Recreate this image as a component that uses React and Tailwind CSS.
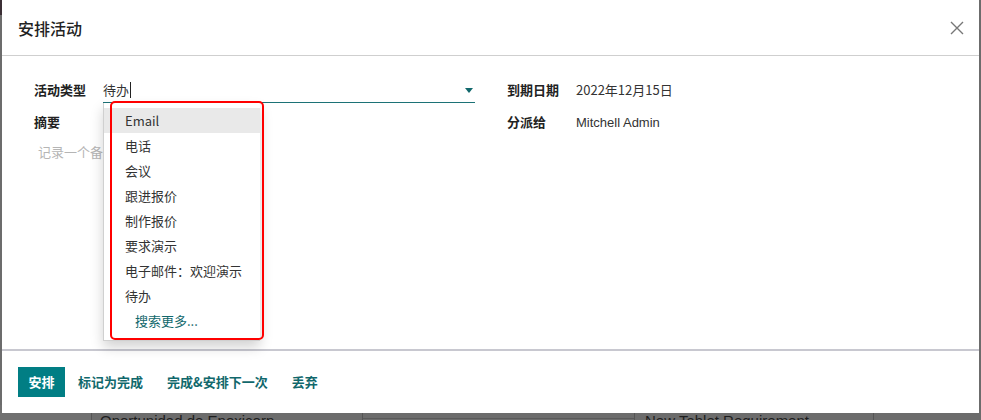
const items = ['Email', '电话', '会议', '跟进报价', '制作报价', '要求演示', '电子邮件：欢迎演示', '待办'];

const FONT = "font-['PingFang_SC','Noto_Sans_CJK_SC',sans-serif]";

const Backdrop = () => (
  <div className="absolute inset-x-0 top-[405px] flex h-[30px] text-[15px] text-[#1e1e1e]">
    <div className="w-[92px] border-r border-[#555] bg-[#707070]" />
    <div className="w-[271px] border-r border-[#555] bg-[#6c6c6c] pl-[8px] pt-[5px] font-['Liberation_Sans',sans-serif]">
      Oportunidad de Epoxicorp
    </div>
    <div className="w-[272px] border-r border-[#555] bg-[#6c6c6c]">
      <div className="mt-[13px] border-t border-[#5a5a5a]" />
    </div>
    <div className="w-[239px] border-r border-[#555] bg-[#6c6c6c] pl-[10px] pt-[5px] font-['Liberation_Sans',sans-serif]">
      New Tablet Requirement
    </div>
    <div className="flex-1 bg-[#6c6c6c]" />
  </div>
);

const Dropdown = () => (
  <div className="absolute left-0 top-[1px] w-[157px] border-b border-l border-[#d0d0d0] bg-white pb-[7px] pt-[5px] shadow-[0_6px_12px_rgba(0,0,0,0.18)]">
    {items.map((it, i) => (
      <div
        key={it}
        className={`h-[25px] pl-[21px] text-[13px] leading-[25px] text-[#333] ${i === 0 ? 'bg-[#e9e9e9] text-[#222]' : ''}`}
      >
        {it}
      </div>
    ))}
    <div className="h-[25px] pl-[31px] text-[13px] leading-[25px] text-[#11686c]">搜索更多...</div>
    <div className="pointer-events-none absolute -top-[2px] bottom-[0px] left-[6px] right-[-4px] rounded-[5px] border-[2.5px] border-[#ff0000]" />
  </div>
);

export default function App() {
  return (
    <div className={`relative h-[420px] w-[981px] overflow-hidden bg-[#6c6c6c] ${FONT}`}>
      <Backdrop />
      <div className="absolute left-0 top-0 h-[15px] w-[2px] bg-[#3b2f35]" />
      <div className="absolute left-[2px] top-0 flex h-[413px] w-[977px] flex-col bg-white">
        <div className="flex h-[56px] shrink-0 items-center justify-between border-b border-[#cfcfcf] pl-[16px] pr-[14px]">
          <div className="text-[16px] font-medium text-[#222]">安排活动</div>
          <svg width="16" height="16" viewBox="0 0 16 16" className="text-[#777]">
            <path d="M2 2 L14 14 M14 2 L2 14" stroke="currentColor" strokeWidth="1.4" />
          </svg>
        </div>

        <div className="relative flex-1 pl-[32px] pt-[21px] text-[13px]">
          <div className="flex">
            <div className="w-[441px]">
              <div className="flex h-[26px] items-center">
                <div className="w-[69px] font-semibold text-[#222]">活动类型</div>
                <div className="relative flex h-[26px] w-[372px] items-center border-b border-[#1c7276]">
                  <span className="text-[#333]">待办</span>
                  <span className="ml-[1px] h-[16px] w-px bg-[#222]" />
                  <span className="absolute right-[2px] top-[11px] h-0 w-0 border-x-[4px] border-t-[5px] border-x-transparent border-t-[#11686c]" />
                  <div className="absolute left-0 top-full z-10">
                    <Dropdown />
                  </div>
                </div>
              </div>
              <div className="mt-[7px] flex h-[24px] items-center">
                <div className="w-[69px] font-semibold text-[#222]">摘要</div>
              </div>
              <div className="mt-[6px] h-[24px] pl-[4px] leading-[24px] text-[#b5b5b5]">记录一个备注...</div>
            </div>
            <div className="ml-[32px]">
              <div className="flex h-[26px] items-center">
                <div className="w-[69px] font-semibold text-[#222]">到期日期</div>
                <div className="text-[#333]">2022年12月15日</div>
              </div>
              <div className="mt-[7px] flex h-[24px] items-center">
                <div className="w-[69px] font-semibold text-[#222]">分派给</div>
                <div className="pt-[2px] font-['Liberation_Sans',sans-serif] text-[#333]">Mitchell Admin</div>
              </div>
            </div>
          </div>
        </div>

        <div className="flex h-[64px] shrink-0 items-center gap-[13px] border-t-2 border-[#c8c8d0] pb-[1px] pl-[16px] text-[13px] font-semibold">
          <button className="h-[30px] w-[47px] bg-[#017e84] text-white">安排</button>
          <button className="h-[30px] pr-[11px] text-[#11686c]">标记为完成</button>
          <button className="h-[30px] pr-[11px] text-[#11686c]">完成&amp;安排下一次</button>
          <button className="h-[30px] text-[#11686c]">丢弃</button>
        </div>
      </div>
    </div>
  );
}
